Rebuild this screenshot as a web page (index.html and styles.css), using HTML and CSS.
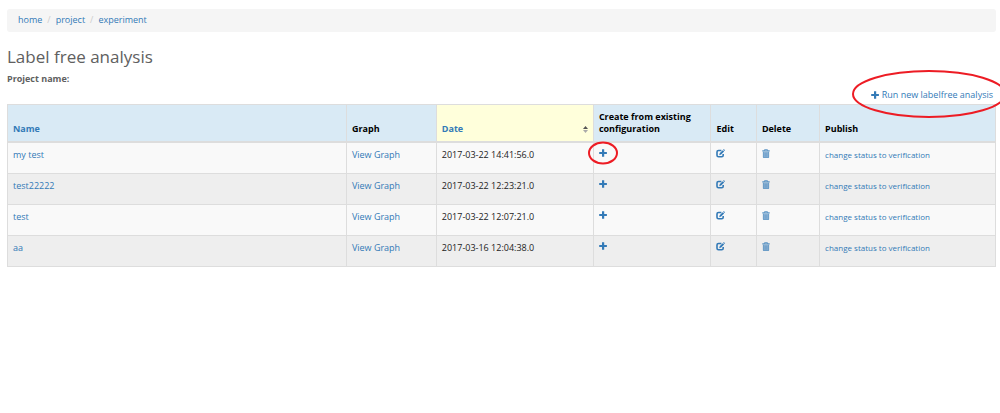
FILE: index.html
```html
<!DOCTYPE html>
<html lang="en">
<head>
    <meta charset="UTF-8">
    <meta name="viewport" content="width=device-width, initial-scale=1.0">
    <title>Label free analysis</title>
    <link rel="stylesheet" href="styles.css">
</head>
<body>
    <!-- Shared icons -->
    <svg class="sprite" aria-hidden="true">
        <symbol id="plus" viewBox="0 0 8 8">
            <path d="M3 .2h2.200V3h2.700v2.100H5.200v2.700H3V5.100H.2V3H3z"/>
        </symbol>
        <symbol id="edit" viewBox="0 0 9 9">
            <path d="M5.400 1.500H2.500Q1 1.500 1 3v3.300q0 1.500 1.500 1.500h3.200q1.500 0 1.500-1.500V5" fill="none" stroke="currentColor" stroke-width="1.600"/>
            <path d="M3.200 6.200l.5-2L6.700 1.200l1.400 1.400-3 3zM7.100.8l.5-.5q.2-.2.4 0l.8.8q.2.2 0 .4l-.5.5z"/>
        </symbol>
        <symbol id="trash" viewBox="0 0 8 9">
            <path d="M.3 1.200h2V.7Q2.300 0 3 0h2q.7 0 .7.7v.5h2v1.200H.3zM3 1.200h2V.7H3z" fill-rule="evenodd" opacity=".8"/>
            <path d="M1 2.800h6v5.400q0 .8-.8.8H1.800Q1 9 1 8.200z" opacity=".5"/>
            <path d="M1.300 2.800v5.400q0 .5.500.5h4.400q.5 0 .5-.5V2.800M3.100 3.500v4.400M4.900 3.500v4.400" fill="none" stroke="currentColor" stroke-width=".6" opacity=".8"/>
        </symbol>
    </svg>

    <nav aria-label="Breadcrumb">
        <ol class="breadcrumb">
            <li><a href="#">home</a></li>
            <li><a href="#">project</a></li>
            <li><a href="#">experiment</a></li>
        </ol>
    </nav>

    <h1>Label free analysis</h1>
    <p class="project">Project name:</p>

    <div class="actions">
        <a class="run" href="#">
            <svg class="icon"><use href="#plus"/></svg>
            Run new labelfree analysis
            <svg class="mark mark-run" viewBox="0 0 154 48" aria-hidden="true"><ellipse cx="77" cy="24" rx="76" ry="23"/></svg>
        </a>
    </div>

    <table>
        <colgroup>
            <col class="col-name">
            <col class="col-graph">
            <col class="col-date">
            <col class="col-create">
            <col class="col-edit">
            <col class="col-delete">
            <col class="col-publish">
        </colgroup>
        <thead>
            <tr>
                <th><a href="#">Name</a></th>
                <th>Graph</th>
                <th class="sorted">
                    <a class="sort" href="#">Date
                        <svg class="arrows" viewBox="0 0 5 7"><path d="M0 3l2.500-3L5 3z" fill="#555"/><path d="M0 4h5L2.500 7z" fill="#aaa"/></svg>
                    </a>
                </th>
                <th>Create from existing configuration</th>
                <th>Edit</th>
                <th>Delete</th>
                <th>Publish</th>
            </tr>
        </thead>
        <tbody>
            <tr>
                <td><a href="#">my test</a></td>
                <td><a href="#">View Graph</a></td>
                <td>2017-03-22 14:41:56.0</td>
                <td>
                    <a class="tool" href="#" aria-label="Create from my test">
                        <svg class="icon"><use href="#plus"/></svg>
                        <svg class="mark mark-create" viewBox="0 0 32 24" aria-hidden="true"><ellipse cx="16" cy="12" rx="14" ry="10.500"/></svg>
                    </a>
                </td>
                <td><a class="tool" href="#" aria-label="Edit my test"><svg class="icon wide"><use href="#edit"/></svg></a></td>
                <td><a class="tool" href="#" aria-label="Delete my test"><svg class="icon tall"><use href="#trash"/></svg></a></td>
                <td><a class="status" href="#">change status to verification</a></td>
            </tr>
            <tr>
                <td><a href="#">test22222</a></td>
                <td><a href="#">View Graph</a></td>
                <td>2017-03-22 12:23:21.0</td>
                <td><a class="tool" href="#" aria-label="Create from test22222"><svg class="icon"><use href="#plus"/></svg></a></td>
                <td><a class="tool" href="#" aria-label="Edit test22222"><svg class="icon wide"><use href="#edit"/></svg></a></td>
                <td><a class="tool" href="#" aria-label="Delete test22222"><svg class="icon tall"><use href="#trash"/></svg></a></td>
                <td><a class="status" href="#">change status to verification</a></td>
            </tr>
            <tr>
                <td><a href="#">test</a></td>
                <td><a href="#">View Graph</a></td>
                <td>2017-03-22 12:07:21.0</td>
                <td><a class="tool" href="#" aria-label="Create from test"><svg class="icon"><use href="#plus"/></svg></a></td>
                <td><a class="tool" href="#" aria-label="Edit test"><svg class="icon wide"><use href="#edit"/></svg></a></td>
                <td><a class="tool" href="#" aria-label="Delete test"><svg class="icon tall"><use href="#trash"/></svg></a></td>
                <td><a class="status" href="#">change status to verification</a></td>
            </tr>
            <tr>
                <td><a href="#">aa</a></td>
                <td><a href="#">View Graph</a></td>
                <td>2017-03-16 12:04:38.0</td>
                <td><a class="tool" href="#" aria-label="Create from aa"><svg class="icon"><use href="#plus"/></svg></a></td>
                <td><a class="tool" href="#" aria-label="Edit aa"><svg class="icon wide"><use href="#edit"/></svg></a></td>
                <td><a class="tool" href="#" aria-label="Delete aa"><svg class="icon tall"><use href="#trash"/></svg></a></td>
                <td><a class="status" href="#">change status to verification</a></td>
            </tr>
        </tbody>
    </table>
</body>
</html>
```

FILE: styles.css
```css
* {
    box-sizing: border-box;
}

body {
    margin: 0;
    padding: 9px 4px 0 7px;
    overflow-x: hidden;
    background-color: #fff;
    color: #222;
    font-family: "Open Sans", "Noto Sans", sans-serif;
    font-size: 9px;
    line-height: 12px;
}

a {
    color: #337ab7;
    text-decoration: none;
}

.sprite {
    display: none;
}

.breadcrumb {
    display: flex;
    margin: 0;
    padding: 5px 11px 6px;
    list-style: none;
    background-color: #f5f5f5;
    border-radius: 3px;
}

.breadcrumb li + li::before {
    content: "/";
    padding: 0 5px;
    color: #ccc;
}

h1 {
    margin: 13px 0 4px;
    color: #606060;
    font-size: 17px;
    font-weight: 400;
    line-height: 24px;
}

.project {
    margin: 0;
    color: #606060;
    font-weight: 700;
}

.actions {
    display: flex;
    justify-content: flex-end;
    padding: 4px 3px 3px 0;
}

.run {
    position: relative;
    display: flex;
    align-items: center;
    gap: 3px;
}

.icon {
    display: block;
    width: 8px;
    height: 8px;
    fill: currentColor;
}

.icon.wide {
    width: 9px;
    height: 9px;
}

.icon.tall {
    height: 9px;
}

/* Red rings around the two ways to start an analysis */
.mark {
    position: absolute;
    fill: none;
    stroke: #ed1c24;
    stroke-width: 2;
    pointer-events: none;
}

.mark-run {
    top: -19px;
    right: -13px;
    width: 154px;
    height: 48px;
}

.mark-create {
    top: -8px;
    left: -12px;
    width: 32px;
    height: 24px;
}

table {
    width: 100%;
    table-layout: fixed;
    border-collapse: collapse;
    box-shadow: 0 2px #f5f5f5;
}

.col-name { width: 34.3%; }
.col-graph { width: 9.1%; }
.col-date { width: 15.9%; }
.col-create { width: 11.9%; }
.col-edit { width: 4.6%; }
.col-delete { width: 6.4%; }
.col-publish { width: 17.8%; }

th,
td {
    border: 1px solid #ddd;
    text-align: left;
}

th {
    padding: 6px 5px;
    background-color: #d9eaf5;
    border-bottom-width: 2px;
    color: #000;
    font-weight: 700;
    vertical-align: bottom;
}

th.sorted {
    background-color: #ffffdb;
}

.sort {
    display: flex;
    align-items: center;
    justify-content: space-between;
}

.arrows {
    width: 5px;
    height: 7px;
}

td {
    height: 31px;
    padding: 6px 5px 0;
    background-color: #f9f9f9;
    vertical-align: top;
}

tbody tr:nth-child(even) td {
    background-color: #eee;
}

.tool {
    position: relative;
    display: block;
    width: 9px;
}

.status {
    display: block;
    font-size: 8px;
}
```
